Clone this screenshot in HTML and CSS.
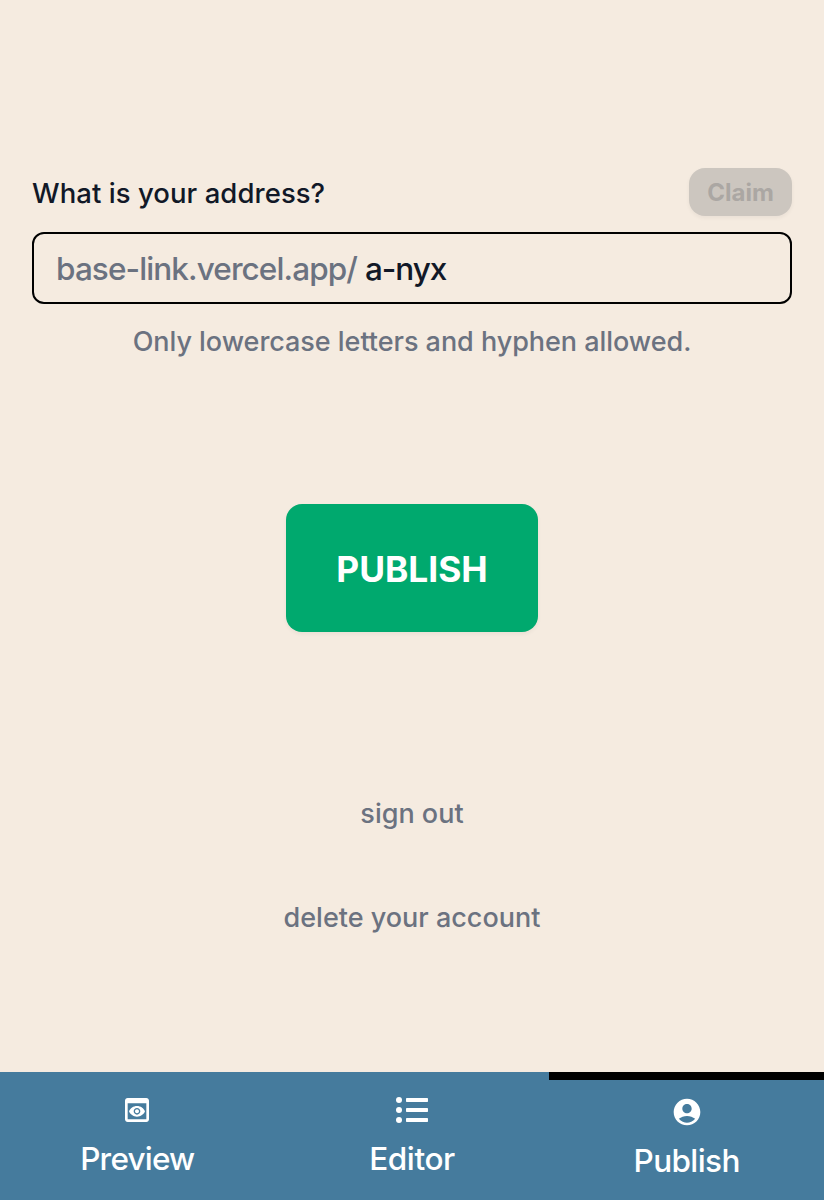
FILE: index.html
```html
<!DOCTYPE html>
<html lang="en">
<head>
<meta charset="utf-8">
<title>Publish</title>
<link rel="stylesheet" href="styles.css">
</head>
<body>
<main class="page">
  <form class="address">
    <div class="address-head">
      <label class="label" for="slug">What is your address?</label>
      <button class="claim" type="button" disabled>Claim</button>
    </div>
    <div class="field"><span class="prefix">base-link.vercel.app/</span><input class="slug" id="slug" type="text" value="a-nyx" spellcheck="false"></div>
    <p class="hint">Only lowercase letters and hyphen allowed.</p>
  </form>
  <button class="publish" type="button">PUBLISH</button>
  <a class="link sign-out">sign out</a>
  <a class="link delete">delete your account</a>
</main>
<nav class="tabs">
  <a class="tab">
    <svg class="icon" viewBox="0 0 24 24"><path d="M19 3H5c-1.110 0-2 .9-2 2v14c0 1.100.89 2 2 2h14c1.100 0 2-.9 2-2V5c0-1.100-.89-2-2-2zm0 16H5V7h14v12zm-5.500-6c0 .83-.67 1.500-1.500 1.500s-1.500-.67-1.500-1.500.67-1.500 1.500-1.500 1.500.67 1.500 1.500zM12 9c-2.730 0-5.060 1.660-6 4 .94 2.340 3.270 4 6 4s5.060-1.660 6-4c-.94-2.340-3.270-4-6-4zm0 6.500c-1.380 0-2.500-1.120-2.500-2.500s1.120-2.500 2.500-2.500 2.500 1.120 2.500 2.500-1.120 2.500-2.500 2.500z"/></svg>
    <span class="tab-name preview-name">Preview</span>
  </a>
  <a class="tab">
    <svg class="icon" viewBox="0 0 32 32"><circle cx="3" cy="6" r="3"/><circle cx="3" cy="16" r="3"/><circle cx="3" cy="26" r="3"/><rect x="10" y="4" width="22" height="4" rx=".7"/><rect x="10" y="14" width="22" height="4" rx=".7"/><rect x="10" y="24" width="22" height="4" rx=".7"/></svg>
    <span class="tab-name">Editor</span>
  </a>
  <a class="tab active">
    <svg class="icon" viewBox="0 0 24 24"><path d="M12 2C6.480 2 2 6.480 2 12s4.480 10 10 10 10-4.480 10-10S17.520 2 12 2zm0 4c1.930 0 3.500 1.570 3.500 3.500S13.930 13 12 13s-3.500-1.570-3.500-3.500S10.070 6 12 6zm0 14c-2.030 0-4.430-.82-6.140-2.880C7.550 15.800 9.680 15 12 15s4.450.8 6.140 2.120C16.430 19.180 14.030 20 12 20z"/></svg>
    <span class="tab-name publish-name">Publish</span>
  </a>
</nav>
</body>
</html>
```
FILE: styles.css
```css
* { box-sizing: border-box; }
body {
  margin: 0;
  height: 1200px;
  display: flex;
  flex-direction: column;
  background: #f5ebe0;
  font-family: Inter, "Liberation Sans", sans-serif;
  font-weight: 450;
  color: #111827;
}
.page {
  flex: 1;
  display: flex;
  flex-direction: column;
  align-items: center;
  padding: 168px 32px 0;
}
.address { width: 100%; }
.address-head {
  display: flex;
  justify-content: space-between;
  align-items: center;
  height: 48px;
}
.label {
  padding: 2px 0 0;
  font-size: 27.500px;
  font-weight: 500;
  line-height: 40px;
  letter-spacing: .06px;
}
button { border: 0; font-family: inherit; }
.claim {
  width: 103px;
  height: 48px;
  padding: 0;
  border-radius: 16px;
  background: #ccc6bf;
  color: #aba7a3;
  font-size: 24px;
  font-weight: 650;
  box-shadow: 0 2px 4px rgba(0, 0, 0, .05);
}
.field {
  display: flex;
  align-items: center;
  height: 72px;
  margin-top: 16px;
  padding-left: 22px;
  border: 2px solid #000;
  border-radius: 12px;
  font-size: 31.500px;
  letter-spacing: -.9px;
}
.prefix { color: #6b7280; }
.slug {
  flex: 1;
  min-width: 0;
  border: 0;
  outline: 0;
  padding: 0 0 0 8px;
  background: none;
  color: inherit;
  font: inherit;
  letter-spacing: -1.100px;
}
.hint {
  margin: 18px 0 0;
  text-align: center;
  font-size: 27px;
  line-height: 40px;
  letter-spacing: -.04px;
  color: #6b7280;
}
.publish {
  width: 252px;
  height: 128px;
  margin-top: 142px;
  padding: 2px 0 0;
  border-radius: 16px;
  background: #00a96e;
  color: #fff;
  font-size: 35.300px;
  font-weight: 650;
  box-shadow: 0 2px 4px rgba(0, 0, 0, .05);
}
.link { font-size: 27px; line-height: 40px; color: #6b7280; }
.sign-out { margin-top: 162px; }
.delete { margin-top: 64px; }
.tabs {
  display: grid;
  grid-template-columns: repeat(3, 1fr);
  height: 128px;
  background: #457b9d;
  color: #fff;
}
.tab {
  display: flex;
  flex-direction: column;
  align-items: center;
  padding-top: 22px;
}
.active { border-top: 8px solid #000; padding-top: 16px; }
.icon { width: 32px; height: 32px; fill: currentColor; }
.tab-name {
  margin-top: 13px;
  font-size: 31.500px;
  line-height: 40px;
  letter-spacing: -.4px;
}
.preview-name { letter-spacing: -.8px; }
.publish-name { letter-spacing: -.6px; }
```
